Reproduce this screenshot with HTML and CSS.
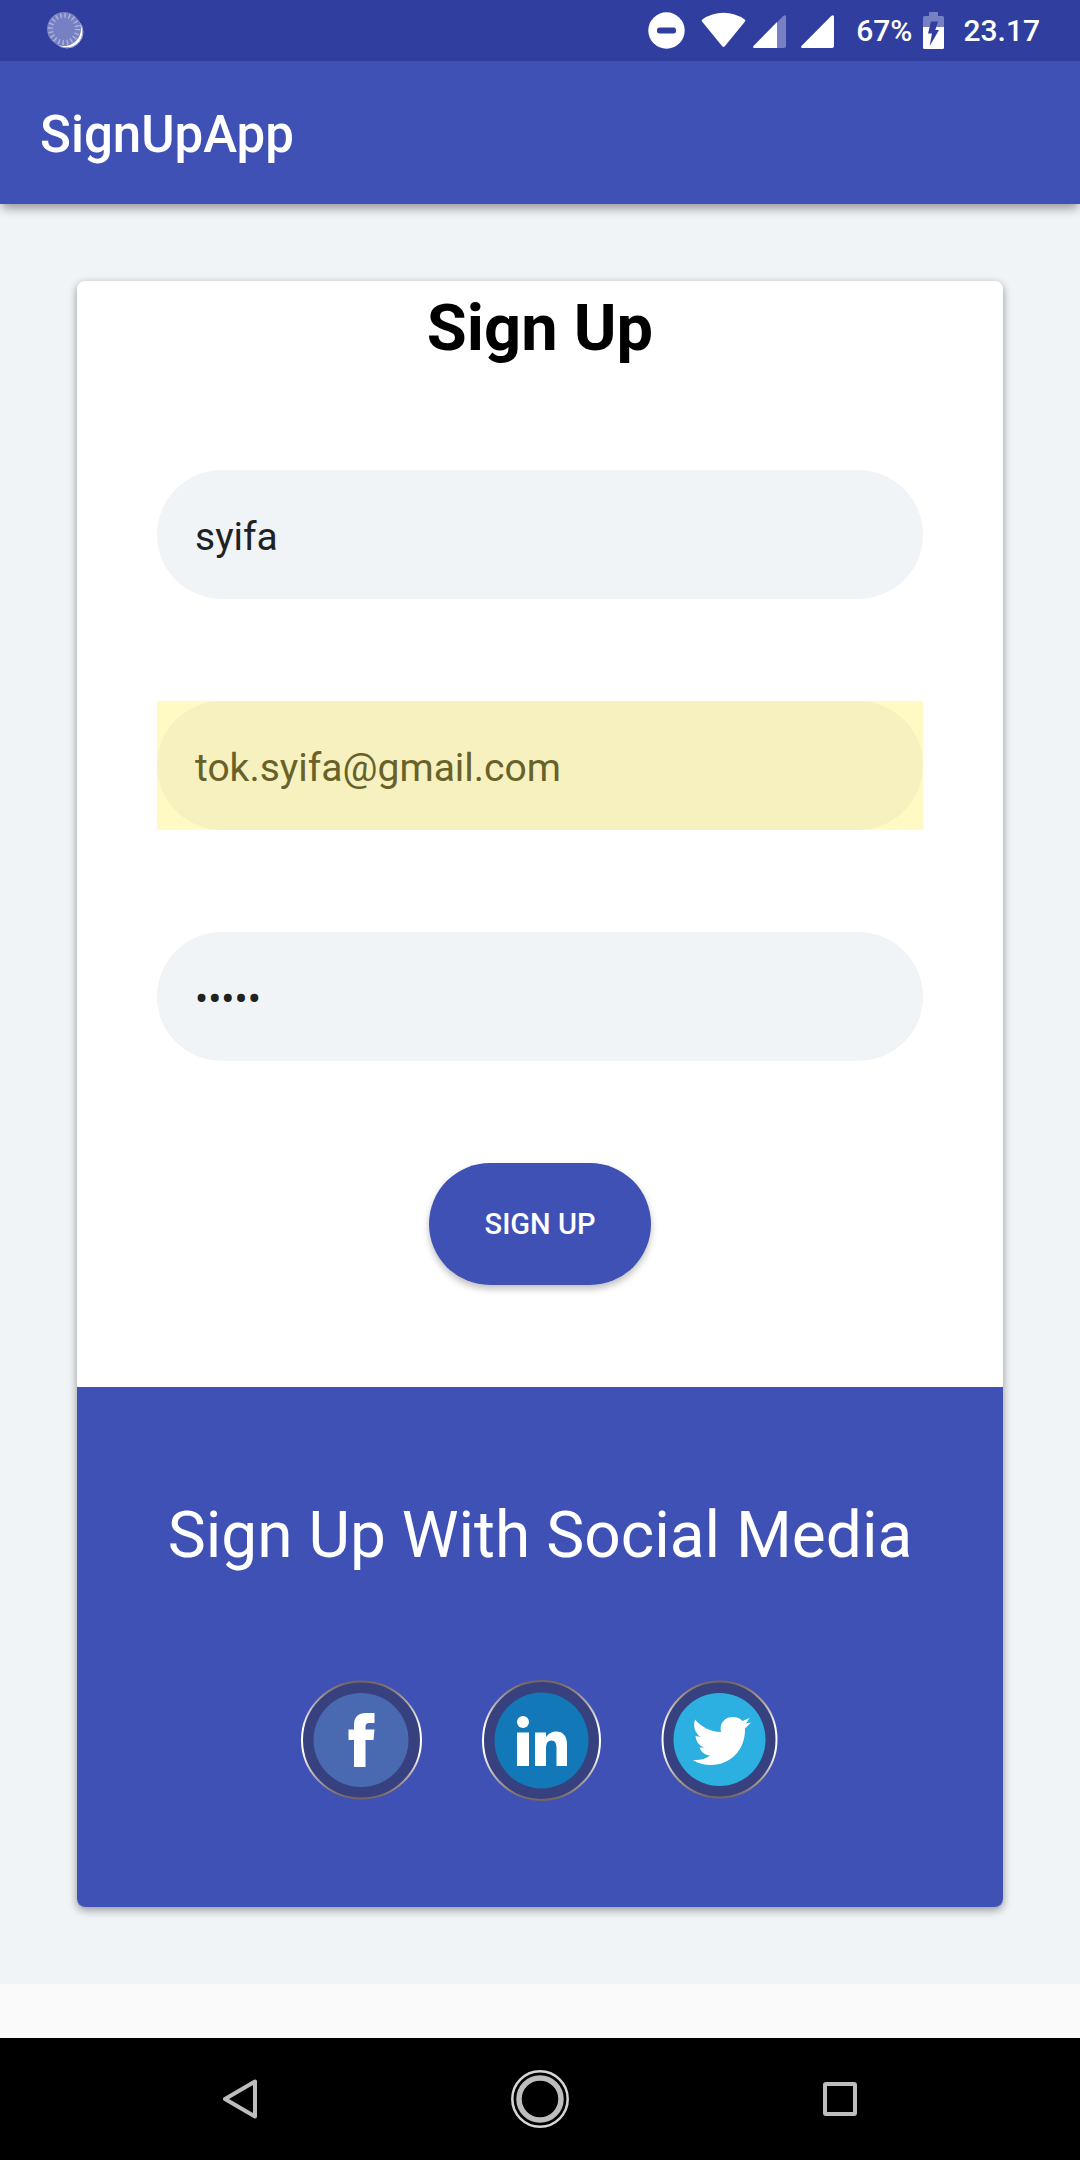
FILE: index.html
```html
<!DOCTYPE html>
<html lang="en">
<head>
<meta charset="utf-8">
<meta name="viewport" content="width=device-width, initial-scale=1">
<title>SignUpApp</title>
<link rel="stylesheet" href="styles.css">
</head>
<body>
<div class="status-bar">
  <svg class="status-sync" width="37" height="37" viewBox="0 0 37 37" aria-hidden="true">
    <circle cx="20" cy="20" r="15.500" fill="#fff"/>
    <circle cx="20" cy="20" r="16" fill="none" stroke="#aab0dc" stroke-width="1"/>
    <circle cx="17" cy="17" r="17" fill="#7780c2"/>
    <circle cx="17" cy="17" r="13.500" fill="none" stroke="#aeb4dc" stroke-width="5" stroke-dasharray="1.400 2.841"/>
  </svg>
  <div class="status-icons">
    <svg width="37" height="37" viewBox="0 0 37 37" aria-hidden="true">
      <circle cx="18.500" cy="18.500" r="18.200" fill="#fff"/>
      <rect x="9" y="15.500" width="19" height="6" rx="2.500" fill="#303f9f"/>
    </svg>
    <svg class="icon-wifi" width="45" height="37" viewBox="0 0 45 37" aria-hidden="true">
      <path d="M1 9.500Q0 8.300 1.300 7.500Q11 .800 22.500 .800T43.700 7.500Q45 8.300 44 9.500L24 34Q22.500 35.800 21 34Z" fill="#fff"/>
    </svg>
    <svg class="icon-cell" width="33" height="37" viewBox="0 0 33 37" aria-hidden="true">
      <path d="M24 10.500L30.200 4Q33 2 33 5V34Q33 36 31 36H24Z" fill="#7780c2"/>
      <path d="M24 10V36H1.500Q-1 36 .700 33.700Z" fill="#fff"/>
    </svg>
    <svg class="icon-cell-full" width="33" height="37" viewBox="0 0 33 37" aria-hidden="true">
      <path d="M.700 33.700L30.200 4Q33 2 33 5V34Q33 36 31 36H1.500Q-1 36 .700 33.700Z" fill="#fff"/>
    </svg>
    <span class="battery-level">67%</span>
    <svg class="icon-battery" width="21" height="37" viewBox="0 0 21 37" aria-hidden="true">
      <path d="M6 0H15V4H19.500Q21 4 21 5.500V15H0V5.500Q0 4 1.500 4H6Z" fill="#7780c2"/>
      <path d="M0 15H21V35.500Q21 37 19.500 37H1.500Q0 37 0 35.500Z" fill="#fff"/>
      <path d="M8 9.500H15L12.300 18H16L6.700 34L9 21.500H5Z" fill="#303f9f"/>
    </svg>
    <time class="clock">23.17</time>
  </div>
</div>
<header class="app-bar"><h1 class="app-title">SignUpApp</h1></header>
<main class="content">
  <div class="card">
    <form class="sign-up" autocomplete="off">
      <h2 class="form-title">Sign Up</h2>
      <div class="field"><input class="field-input" type="text" aria-label="Name" value="syifa"></div>
      <div class="field field-autofilled"><input class="field-input" type="email" aria-label="Email" value="tok.syifa@gmail.com"></div>
      <div class="field"><input class="field-input" type="password" aria-label="Password" value="syifa"></div>
      <button class="submit" type="button">SIGN UP</button>
    </form>
    <section class="social">
      <h2 class="social-title">Sign Up With Social Media</h2>
      <div class="social-links">
        <a href="#facebook" class="social-link" aria-label="Facebook">
          <svg width="121" height="121" viewBox="0 0 121 121">
            <defs><linearGradient id="ring" x1="0" y1="0" x2="0" y2="1"><stop offset="0" stop-color="#75635f"/><stop offset=".15" stop-color="#a79c9b"/><stop offset=".4" stop-color="#fff"/><stop offset=".6" stop-color="#fff"/><stop offset=".85" stop-color="#a79c9b"/><stop offset="1" stop-color="#75635f"/></linearGradient></defs>
            <ellipse cx="60.500" cy="60" rx="59.500" ry="58.500" fill="#37417f" stroke="url(#ring)" stroke-width="2"/>
            <ellipse cx="60" cy="60" rx="47.500" ry="47" fill="#4969b0"/>
            <path d="M53 87V60H47.500V49.500H53V45Q53 33 65 33H73.500V43H68Q64.500 43 64.500 46.500V49.500H73.500L72.500 60H64.500V87Z" fill="#fff"/>
          </svg>
        </a>
        <a href="#linkedin" class="social-link" aria-label="LinkedIn">
          <svg width="121" height="121" viewBox="-1 0 121 121">
            <ellipse cx="60.500" cy="60.500" rx="58.500" ry="59.500" fill="#37417f" stroke="url(#ring)" stroke-width="2"/>
            <ellipse cx="60.500" cy="60.500" rx="47" ry="48" fill="#1278b7"/>
            <circle cx="42" cy="42" r="6" fill="#fff"/>
            <path d="M36 52.500H48V86H36ZM54 52.500H65V57Q69 51.500 75 51.500Q86 51.500 86 65V86H75.500V67.500Q75.500 60.500 70.500 60.500Q65 60.500 65 67.500V86H54Z" fill="#fff"/>
          </svg>
        </a>
        <a href="#twitter" class="social-link" aria-label="Twitter">
          <svg width="121" height="121" viewBox="0 0 121 121">
            <ellipse cx="60.500" cy="59.500" rx="57" ry="58" fill="#37417f" stroke="url(#ring)" stroke-width="2"/>
            <ellipse cx="60.500" cy="59.500" rx="46" ry="46.500" fill="#2bb0e1"/>
            <path d="M36 39.500C42.500 47 50.500 51.500 62 52C60 43 66 37 74 37C78 37 81 38.500 83.500 41L90.500 38L87 43.500L92 42.500L86 48.500C86.500 70 71.500 85 52 85C45 85 39 83.500 34 80C41 80.500 46.500 79 51 75.500C46 75 42 72 40.500 67.500H45.500C40 65.500 37 61.500 36.500 56L41.500 57C35.500 52.500 34 46 36 39.500Z" fill="#fff"/>
          </svg>
        </a>
      </div>
    </section>
  </div>
</main>
<nav class="nav-bar" aria-label="System">
  <button class="nav-button" type="button" aria-label="Back">
    <svg width="60" height="60" viewBox="0 0 60 60"><path d="M45 12.500V47.500L15 30Z" fill="none" stroke="#bdbdbd" stroke-width="4" stroke-linejoin="round"/></svg>
  </button>
  <button class="nav-button" type="button" aria-label="Home">
    <svg width="60" height="60" viewBox="0 0 60 60" fill="none"><circle cx="30" cy="30" r="27.700" stroke="#d6d6d6" stroke-width="2.500"/><circle cx="30" cy="30" r="21" stroke="#bdbdbd" stroke-width="5.500"/></svg>
  </button>
  <button class="nav-button" type="button" aria-label="Recent apps">
    <svg width="60" height="60" viewBox="0 0 60 60"><rect x="15" y="15" width="30" height="30" rx="1" fill="none" stroke="#bdbdbd" stroke-width="4"/></svg>
  </button>
</nav>
</body>
</html>
```
FILE: styles.css
```css
* {
  box-sizing: border-box;
}

body {
  display: flex;
  flex-direction: column;
  min-height: 100vh;
  margin: 0;
  background: #fafafa;
  font-family: Roboto, "Noto Sans", sans-serif;
}

h1,
h2 {
  margin: 0;
}

svg {
  display: block;
  flex: none;
}

.status-bar {
  display: flex;
  align-items: center;
  justify-content: space-between;
  height: 61px;
  padding: 0 40px 0 47px;
  background: #303f9f;
  color: #fff;
  font-size: 30px;
  font-weight: 500;
}

.status-icons {
  display: flex;
  align-items: center;
}

.icon-wifi {
  margin-left: 16px;
}

.icon-cell {
  margin-left: 7px;
}

.icon-cell-full {
  margin-left: 15px;
}

.battery-level {
  margin-left: 22px;
}

.icon-battery {
  margin-left: 11px;
}

.clock {
  margin-left: 19px;
}

.app-bar {
  position: relative;
  display: flex;
  align-items: center;
  height: 143px;
  padding: 4px 40px 0;
  background: #3f51b5;
  box-shadow: 0 6px 10px -2px rgba(0, 0, 0, 0.4);
}

.app-title {
  color: #fff;
  font-size: 51px;
  font-weight: 500;
}

.content {
  padding: 77px;
  background: #f0f4f7;
}

.card {
  overflow: hidden;
  border-radius: 8px;
  background: #fff;
  box-shadow: 0 3px 8px rgba(0, 0, 0, 0.4);
}

.sign-up {
  display: flex;
  flex-direction: column;
  gap: 102px;
  padding: 7px 80px 102px;
}

.form-title {
  color: #000;
  font-size: 65px;
  font-weight: 700;
  line-height: 80px;
  text-align: center;
}

.field-input {
  display: block;
  width: 100%;
  height: 129px;
  padding: 4px 38px 0;
  border: 0;
  border-radius: 65px;
  outline: 0;
  background: #f0f4f7;
  color: #202222;
  font: 400 39px Roboto, "Noto Sans", sans-serif;
}

.field-autofilled {
  background: #fff9c4;
}

.field-autofilled .field-input {
  background: #f6f1bf;
  color: #686128;
}

.submit {
  align-self: center;
  height: 122px;
  padding: 0 56px;
  border: 0;
  border-radius: 61px;
  background: #3f51b5;
  box-shadow: 0 4px 7px rgba(0, 0, 0, 0.25);
  color: #fff;
  font: 500 29px Roboto, "Noto Sans", sans-serif;
}

.social {
  display: flex;
  flex-direction: column;
  align-items: center;
  gap: 102px;
  padding: 107px 40px 106px;
  background: #3f51b5;
}

.social-title {
  color: #fff;
  font-size: 64px;
  font-weight: 400;
  line-height: 84px;
  text-align: center;
}

.social-links {
  display: flex;
  gap: 58px;
}

.nav-bar {
  display: flex;
  align-items: center;
  justify-content: center;
  gap: 240px;
  height: 122px;
  margin-top: auto;
  background: #000;
}

.nav-button {
  padding: 0;
  border: 0;
  background: none;
}
```
